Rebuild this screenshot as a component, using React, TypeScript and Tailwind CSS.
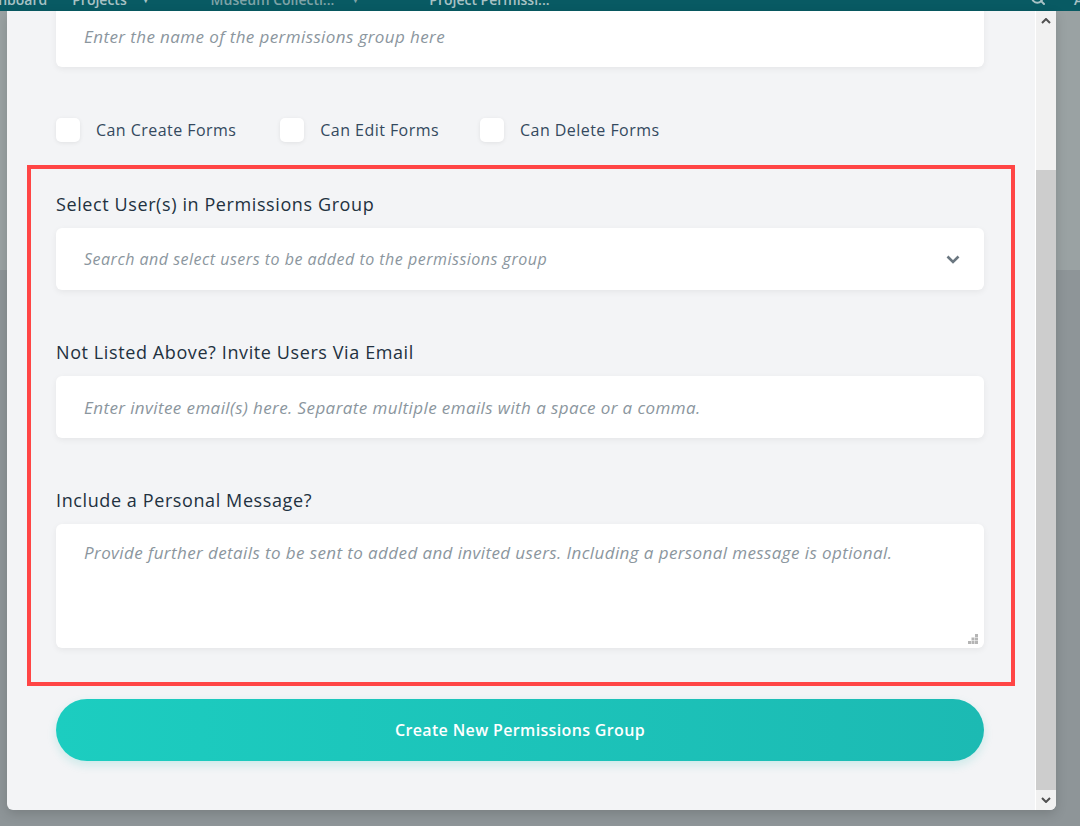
import { Search } from 'lucide-react';

const font = { fontFamily: '"Open Sans", "Noto Sans", sans-serif' };

function NavBar() {
  return (
    <div className="relative h-[11px] shrink-0 overflow-hidden bg-[#085a63] text-[14px] font-semibold text-[#a9c2c5]">
      <div className="absolute left-0 top-[-11px] flex items-center whitespace-nowrap">
        <span className="ml-[-27px]">Dashboard</span>
        <span className="ml-[25px]">Projects</span>
        <span className="ml-[14px] text-[10px]">▼</span>
        <span className="ml-[60px] text-[#7fa3a7]">Museum Collecti...</span>
        <span className="ml-[16px] text-[10px] text-[#7fa3a7]">▼</span>
        <span className="ml-[69px]">Project Permissi...</span>
      </div>
      <Search className="absolute left-[1030px] top-[-10px] h-4 w-4 text-[#a9c2c5]" strokeWidth={3} />
      <span className="absolute left-[1074px] top-[-11px]">A</span>
    </div>
  );
}

function Checkbox({ label, className }: { label: string; className?: string }) {
  return (
    <label className={`flex items-center gap-4 ${className ?? ''}`}>
      <span className="h-6 w-6 rounded-[5px] bg-white shadow-[0_1px_4px_rgba(0,0,0,0.08)]" />
      <span className="text-[16px] tracking-[0.45px] text-[#34495e]">{label}</span>
    </label>
  );
}

const boxCls =
  'h-[62px] w-full rounded-md bg-white px-7 italic text-[#34495e] shadow-[0_2px_6px_rgba(0,0,0,0.06)] outline-none placeholder:italic placeholder:text-[#8b969e]';
const fieldCls = `${boxCls} text-[17px] tracking-[0.4px]`;

function Label({ children }: { children: string }) {
  return <div className="h-6 text-[18px] leading-6 tracking-[0.6px] text-[#22313f]">{children}</div>;
}

function ScrollArrow({ up }: { up?: boolean }) {
  return (
    <div className="flex h-[20px] items-center justify-center">
      <svg width="10" height="6" viewBox="0 0 10 6">
        <polyline
          points={up ? '1,5 5,1 9,5' : '1,1 5,5 9,1'}
          fill="none"
          stroke="#505050"
          strokeWidth="2"
        />
      </svg>
    </div>
  );
}

export default function App() {
  return (
    <div className="relative h-[826px] w-[1080px] overflow-hidden bg-[#8e9598]" style={font}>
      <div className="flex h-full flex-col">
        <NavBar />
        <div className="h-[259px] bg-[#9aa2a3]" />
      </div>

      <div className="absolute left-[7px] top-[11px] flex h-[799px] w-[1049px] overflow-hidden rounded-b-md bg-[#f3f4f6] shadow-[0_4px_12px_rgba(0,0,0,0.15)]">
        <div className="flex flex-1 flex-col pl-[49px] pr-[51px]">
          <input className={`${fieldCls} mt-[-6px] shrink-0`} placeholder="Enter the name of the permissions group here" />

          <div className="mt-[51px] flex items-center">
            <Checkbox label="Can Create Forms" />
            <Checkbox label="Can Edit Forms" className="ml-[44px]" />
            <Checkbox label="Can Delete Forms" className="ml-[41px]" />
          </div>

          <div className="ml-[-29px] mr-[-31px] mt-[23px] border-4 border-[#ff4545] pb-[34px] pl-[25px] pr-[27px] pt-[23px]">
            <Label>Select User(s) in Permissions Group</Label>
            <div className={`${boxCls} mt-3 flex items-center justify-between pr-6 text-[16px] tracking-[0.5px]`}>
              <span className="text-[#8b969e]">Search and select users to be added to the permissions group</span>
              <svg width="14" height="9" viewBox="0 0 14 9">
                <polyline points="1.5,1.5 7,7 12.5,1.5" fill="none" stroke="#6b7780" strokeWidth="2.6" />
              </svg>
            </div>

            <div className="mt-[50px]">
              <Label>Not Listed Above? Invite Users Via Email</Label>
            </div>
            <input
              className={`${fieldCls} mt-3`}
              placeholder="Enter invitee email(s) here. Separate multiple emails with a space or a comma."
            />

            <div className="mt-[50px]">
              <Label>Include a Personal Message?</Label>
            </div>
            <div className="relative mt-3">
              <textarea
                className={`${fieldCls} block h-[124px] resize-none pt-[17px] leading-6`}
                placeholder="Provide further details to be sent to added and invited users. Including a personal message is optional."
              />
              <svg className="absolute bottom-[4px] right-[6px]" width="10" height="10" viewBox="0 0 10 10">
                <g fill="#b5b5b5">
                  <rect x="7" y="0" width="3" height="3" />
                  <rect x="3.5" y="3.5" width="3" height="3" />
                  <rect x="7" y="3.5" width="3" height="3" />
                  <rect x="0" y="7" width="3" height="3" />
                  <rect x="3.5" y="7" width="3" height="3" />
                  <rect x="7" y="7" width="3" height="3" />
                </g>
              </svg>
            </div>
          </div>

          <button className="mt-[13px] h-[62px] w-full shrink-0 rounded-full bg-gradient-to-r from-[#1ccdc0] to-[#1cbab3] text-[16px] font-semibold tracking-[0.35px] text-white shadow-[0_4px_10px_rgba(28,190,180,0.18)]">
            Create New Permissions Group
          </button>
        </div>

        <div className="flex w-[21px] flex-col border-l border-white bg-[#f1f1f1]">
          <ScrollArrow up />
          <div className="mt-[139px] flex-1 bg-[#cdcdcd]" />
          <ScrollArrow />
        </div>
      </div>
    </div>
  );
}
